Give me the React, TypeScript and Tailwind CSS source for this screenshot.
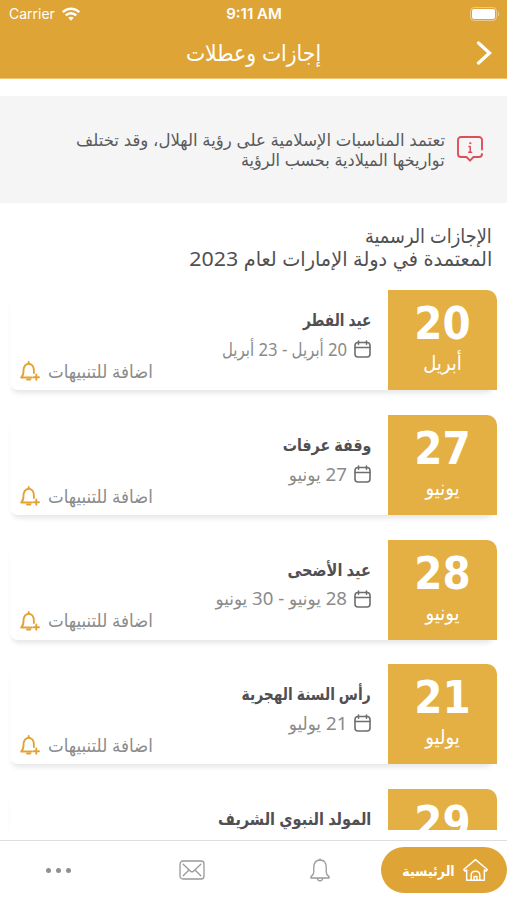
/**
 * Official holidays screen: notice banner, list of dated holiday cards
 * and the bottom tab bar. Right-to-left layout.
 */

import { clsx } from 'clsx'

interface Holiday {
  day: string
  month?: string
  title: string
  /** Horizontal fit of the title */
  titleFit: string
  range?: string
  /** Horizontal fit of the date range */
  rangeFit?: string
}

const HOLIDAYS: Holiday[] = [
  { day: '20', month: 'أبريل', title: 'عيد الفطر', titleFit: 'scale-x-[0.895]', range: '20 أبريل - 23 أبريل', rangeFit: 'scale-x-[0.926]' },
  { day: '27', month: 'يونيو', title: 'وقفة عرفات', titleFit: 'scale-x-[0.93]', range: '27 يونيو', rangeFit: 'scale-x-[1.04]' },
  { day: '28', month: 'يونيو', title: 'عيد الأضحى', titleFit: 'scale-x-[0.95]', range: '28 يونيو - 30 يونيو', rangeFit: 'scale-x-[1.035]' },
  { day: '21', month: 'يوليو', title: 'رأس السنة الهجرية', titleFit: 'scale-x-[0.905]', range: '21 يوليو', rangeFit: 'scale-x-[1.04]' },
  { day: '29', title: 'المولد النبوي الشريف', titleFit: 'scale-x-[0.95]' },
]

function WifiIcon() {
  return (
    <svg width="18" height="14" viewBox="0 0 18 14" fill="none" stroke="white" strokeWidth="2.5">
      <path d="M.8 5.200C5.300 .5 12.700 .5 17.200 5.200" />
      <path d="M3.800 8.400c2.900-2.900 7.500-2.900 10.400 0" />
      <path d="M6.200 10.700c1.600-1.400 4-1.400 5.600 0L9 13.700z" fill="white" stroke="none" />
    </svg>
  )
}

function NoticeIcon() {
  return (
    <svg width="26" height="26" viewBox="0 0 26 26" fill="none" stroke="#dc5058" strokeWidth="1.900" strokeLinecap="round" strokeLinejoin="round">
      <path d="M25 13.500V4a3 3 0 0 0-3-3H4a3 3 0 0 0-3 3v14a3 3 0 0 0 3 3h5.500l3.500 3.700 3.500-3.700H22a3 3 0 0 0 3-3" />
      <path d="M13.200 10.500V16M12 10.500h1.200M11.700 16.300h3" strokeWidth="1.500" />
      <circle cx="13.200" cy="7.200" r="0.600" strokeWidth="1" fill="#dc5058" />
    </svg>
  )
}

function CalendarIcon() {
  return (
    <svg width="17" height="18" viewBox="0 0 17 18" fill="none" stroke="#6e6e70" strokeWidth="1.600" strokeLinecap="round">
      <rect x="1" y="2.500" width="15" height="14.500" rx="3" />
      <path d="M1 7.500h15M4.500 1v3.200M12.500 1v3.200" />
    </svg>
  )
}

function AddBellIcon() {
  return (
    <svg width="20" height="20" viewBox="0 0 20 20" fill="none" stroke="#e5a234" strokeWidth="1.900" strokeLinecap="round" strokeLinejoin="round">
      <path d="M12 16.500H1.200c1.800-1.600 2.300-3.500 2.300-6.500 0-4 1.800-7.200 5.200-7.200s5.200 3.200 5.200 7.200v2" />
      <path d="M8.700 2.500V1M7 18.500h3.300M16.300 13.500v5.300M13.700 16.200h5.300" />
    </svg>
  )
}

function BellIcon() {
  return (
    <svg width="20" height="24" viewBox="0 0 20 24" fill="none" stroke="#999" strokeWidth="1.300" strokeLinejoin="round">
      <path d="M10 2C5.800 2 3.800 5 3.800 9v5c0 2-1 3.300-2.800 4.600V20h18v-1.400c-1.800-1.300-2.800-2.600-2.800-4.600V9c0-4-2-7-6.200-7z" />
      <path d="M10 2V.5M7.300 20c.2 3.800 5.200 3.800 5.400 0" />
    </svg>
  )
}

function MailIcon() {
  return (
    <svg width="26" height="20" viewBox="0 0 26 20" fill="none" stroke="#999" strokeWidth="1.300" strokeLinecap="round">
      <rect x="1" y="1" width="24" height="18" rx="3" />
      <path d="M4.200 4.200l7.300 7c.9 .8 2.100 .8 3 0l7.300-7M4.200 15.800l5.300-5.300M21.800 15.800l-5.300-5.300" />
    </svg>
  )
}

function HomeIcon() {
  return (
    <svg width="25" height="24" viewBox="0 0 26 24" fill="none" stroke="white" strokeWidth="1.500" strokeLinecap="round" strokeLinejoin="round">
      <path d="M3.800 12L2 13.200 .8 11.500 13 1.200l12.200 10.300L24 13.200 22.200 12M3.800 12v10.700h4.700V17.500c0-5.500 9-5.500 9 0v5.200h4.700V12" />
      <path d="M8.500 22.700h9M11.500 22.500v-3.700h3v3.700" />
    </svg>
  )
}

function HolidayCard({ day, month, title, titleFit, range, rangeFit }: Holiday) {
  return (
    <div className="flex h-[100px] shrink-0 rounded-xl rounded-bl-lg bg-white shadow-[0_5px_5px_-2px_rgba(0,0,0,0.1)]">
      <div className="flex w-[109px] shrink-0 flex-col items-center rounded-tr-[10px] bg-[#e4af43] font-['DejaVu_Sans',sans-serif] text-white">
        <span className="mt-[7px] text-[45px] leading-[53px] font-bold">{day}</span>
        {month && <span className="mt-px text-[20px] leading-[24px]">{month}</span>}
      </div>
      <div className="flex flex-1 flex-col items-start pr-[17px] pl-[10px]">
        <h2 className={clsx('mt-[17px] origin-right text-[17px] leading-[26px] font-bold text-[#505052]', titleFit)}>{title}</h2>
        {range && (
          <div className="mt-[3px] flex h-[26px] items-center gap-[7px] text-[18px] text-[#8b8b8b]">
            <CalendarIcon />
            <span className={clsx('origin-right', rangeFit)}>{range}</span>
          </div>
        )}
        {range && (
          <button className="mt-[-3px] flex h-[24px] items-center gap-[8px] self-end text-[18px] text-[#8b8b8b]">
            <span className="origin-left scale-x-[1.03]">اضافة للتنبيهات</span>
            <AddBellIcon />
          </button>
        )}
      </div>
    </div>
  )
}

export default function App() {
  return (
    <div dir="rtl" className="flex h-[900px] w-[507px] flex-col overflow-hidden bg-white font-['Noto_Sans','DejaVu_Sans',sans-serif] font-stretch-condensed">
      <header className="h-[79px] shrink-0 border-b border-[#efc66e] bg-[#dea435] text-white">
        {/* Status bar */}
        <div dir="ltr" className="grid h-[27px] grid-cols-3 items-center pr-[8px] pl-[9px] font-['Inter',sans-serif] text-[14px]">
          <div className="flex items-center gap-[7px]">
            <span>Carrier</span>
            <WifiIcon />
          </div>
          <span className="pt-[2px] text-center text-[15px] font-semibold">9:11 AM</span>
          <div className="flex items-center justify-end gap-px">
            <div className="h-[14px] w-[27px] rounded-[4px] border border-white/40 p-px">
              <div className="h-full rounded-[2px] bg-white" />
            </div>
            <div className="h-[4px] w-px bg-white/40" />
          </div>
        </div>
        <div className="grid h-[51px] grid-cols-[40px_1fr_40px] items-center">
          <svg className="mr-[15px]" width="16" height="24" viewBox="0 0 16 24" fill="none" stroke="white" strokeWidth="3.300" strokeLinecap="round">
            <path d="M2.500 2l11 10-11 10" />
          </svg>
          <h1 className="scale-x-[0.985] text-center text-[23px]">إجازات وعطلات</h1>
        </div>
      </header>

      <section className="mt-[17px] flex h-[107px] shrink-0 items-start gap-[12px] bg-[#f5f5f5] pr-[24px]">
        <div className="mt-[40px]">
          <NoticeIcon />
        </div>
        <div className="mt-[34px] flex flex-col items-start text-[17px] leading-[20px] whitespace-nowrap text-[#5a5a5c]">
          <p className="origin-right scale-x-[1.082]">تعتمد المناسبات الإسلامية على رؤية الهلال، وقد تختلف</p>
          <p className="origin-right scale-x-[1.052]">تواريخها الميلادية بحسب الرؤية</p>
        </div>
      </section>

      <div className="mt-[21px] flex h-[66.400px] shrink-0 flex-col items-start pr-[15px] text-[20px] leading-[23px] whitespace-nowrap text-[#505052]">
        <p className="origin-right scale-x-[0.985]">الإجازات الرسمية</p>
        <p className="origin-right scale-x-[1.07]">المعتمدة في دولة الإمارات لعام 2023</p>
      </div>

      <main className="flex h-[539.600px] shrink-0 flex-col gap-[24.700px] overflow-hidden pr-[10px] pl-[10px]">
        {HOLIDAYS.map((h) => (
          <HolidayCard key={h.day} {...h} />
        ))}
      </main>

      <nav className="mt-[10px] flex h-[60px] shrink-0 items-center border-t border-[#dedede] bg-white">
        <button className="flex h-[46px] w-[126px] items-center justify-center gap-[8px] rounded-full bg-[#dea435] pl-[2px] text-[14px] font-bold text-white">
          <HomeIcon />
          <span>الرئيسية</span>
        </button>
        <div className="mr-[51px]">
          <BellIcon />
        </div>
        <div className="mr-[105px]">
          <MailIcon />
        </div>
        <div className="mr-[108px] flex gap-[5px]">
          <i className="size-[5px] rounded-full bg-[#909090]" />
          <i className="size-[5px] rounded-full bg-[#909090]" />
          <i className="size-[5px] rounded-full bg-[#909090]" />
        </div>
      </nav>
    </div>
  )
}
